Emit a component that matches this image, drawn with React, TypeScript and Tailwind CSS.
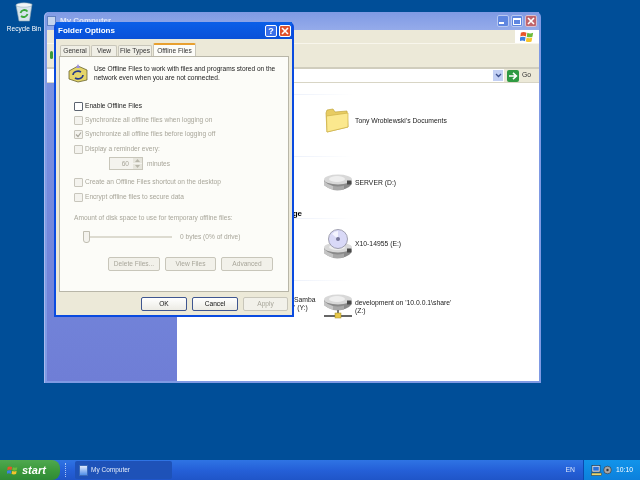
const FONT = 'font-["Liberation_Sans",Arial,sans-serif]';

function WinFlag({ size = 12 }: { size?: number }) {
  return (
    <svg width={size} height={size} viewBox="0 0 16 16">
      <path d="M1 3 Q4 1.5 7.4 3 L6.6 7.4 Q3.5 6 0.4 7.4 Z" fill="#e8552a" />
      <path d="M8.4 3.2 Q11.5 4.6 15 3.2 L14.2 7.6 Q11 9 7.7 7.6 Z" fill="#6dbb3a" />
      <path d="M0.2 8.4 Q3.4 7 6.4 8.4 L5.6 12.8 Q2.6 11.4 -0.6 12.8 Z" fill="#3d7fe0" />
      <path d="M7.5 8.6 Q10.8 10 14 8.6 L13.2 13 Q10 14.4 6.7 13 Z" fill="#f5c42c" />
    </svg>
  );
}

function DriveBody({ y = 0 }: { y?: number }) {
  return (
    <g transform={`translate(0 ${y})`}>
      <path d="M1 6 V11 Q3 13 8 15 Q15 17 22 15 Q27 13 29 10 V6 Z" fill="#8a8a8a" />
      <path d="M1 7 Q5 11 10 12 V16 Q4 14 1 11 Z" fill="#c4c4c4" />
      <path d="M10 12 Q16 13 21 11.5 V15.5 Q15 17 10 16 Z" fill="#a8a8a8" />
      <ellipse cx="15" cy="5.5" rx="14" ry="5" fill="#d8d8d8" />
      <ellipse cx="14" cy="5" rx="8" ry="3" fill="#eeeeee" />
      <rect x="24" y="6.5" width="4" height="4" fill="#4a4a4a" />
    </g>
  );
}

function Hdd() {
  return (
    <svg width="30" height="17" viewBox="0 0 30 17">
      <DriveBody />
    </svg>
  );
}

function CdDrive() {
  return (
    <svg width="30" height="30" viewBox="0 0 30 30">
      <DriveBody y={13} />
      <circle cx="15" cy="10" r="9.5" fill="#d9d9f7" stroke="#8c8c9c" strokeWidth="0.8" />
      <path d="M9 5 A8 8 0 0 1 15 2 L15 10 Z" fill="#f4f4ff" />
      <circle cx="15" cy="10" r="2" fill="#77779a" />
    </svg>
  );
}

function NetDrive() {
  return (
    <svg width="30" height="25" viewBox="0 0 30 25">
      <DriveBody />
      <rect x="1" y="21" width="28" height="2" fill="#666" />
      <rect x="14" y="16" width="2" height="5" fill="#777" />
      <rect x="12" y="19" width="6" height="5" fill="#e8c84a" stroke="#a08a20" strokeWidth="0.5" />
    </svg>
  );
}

function Folder() {
  return (
    <svg width="24" height="25" viewBox="0 0 24 25" className="ml-[2px]">
      <path d="M1 5 L2 2 L8 1 L10 4 L22 3 L23 19 L2 24 Z" fill="#e8cc62" stroke="#c2a63e" strokeWidth="0.7" />
      <path d="M1.5 8 L23 5 L23 19 L2 24 Z" fill="#fbe88e" stroke="#cfb148" strokeWidth="0.7" />
    </svg>
  );
}

function DriveRow({ icon, top, children }: { icon: React.ReactNode; top: string; children: React.ReactNode }) {
  return (
    <div className={`flex items-center ${top}`}>
      <div className="w-[32px] flex justify-start">{icon}</div>
      <div className="text-[6.8px] leading-[8px] text-[#222] whitespace-nowrap">{children}</div>
    </div>
  );
}

function Section({ label, children }: { label?: string; children?: React.ReactNode }) {
  return (
    <div className="h-[62px] relative">
      <div className="h-[11px] text-[8px] leading-[13px] font-bold text-black text-right pr-[237px]">{label}</div>
      <div className="h-px bg-gradient-to-r from-[#c8d4f0] to-white w-[176px]" />
      {children}
    </div>
  );
}

function TitleButton({ kind, faded }: { kind: 'help' | 'close' | 'min' | 'max'; faded?: boolean }) {
  const blue = faded ? 'bg-[#5f86e0] border-[#b8c8f0]' : 'bg-[#3a6fe8] border-white';
  const red = faded ? 'bg-[#c0646c] border-[#d8c0d0]' : 'bg-[#e0522c] border-white';
  return (
    <div className={`w-[12px] h-[12px] rounded-[2px] border flex items-end justify-center ${kind === 'close' ? red : blue}`}>
      {kind === 'help' && <span className="text-[9px] leading-[10px] font-bold text-white w-full text-center">?</span>}
      {kind === 'close' && (
        <svg width="10" height="10" viewBox="0 0 10 10">
          <path d="M2 2 L8 8 M8 2 L2 8" stroke="white" strokeWidth="1.6" />
        </svg>
      )}
      {kind === 'min' && <div className="w-[5px] h-[2px] bg-white mb-[2px] mr-[3px]" />}
      {kind === 'max' && <div className="w-[8px] h-[7px] border border-white border-t-2 mb-[1px]" />}
    </div>
  );
}

function ExplorerWindow() {
  return (
    <div className="absolute left-[44px] top-[12px] w-[497px] h-[371px] bg-[#7f9ae4] rounded-t-[5px] flex flex-col pl-[3px] pr-[2px] pb-[2px] shadow-[inset_1px_0_0_#a9bcf0]">
      <div className="h-[18px] flex items-center bg-gradient-to-b from-[#7f9ae4] to-[#95abea]">
        <div className="w-[9px] h-[10px] bg-[#c5d4ee] border border-[#5f7fc0]" />
        <span className="ml-[4px] text-[8px] font-bold text-[#dfe6f8]">My Computer</span>
        <div className="ml-auto flex gap-[2px] pr-[2px]">
          <TitleButton kind="min" faded />
          <TitleButton kind="max" faded />
          <TitleButton kind="close" faded />
        </div>
      </div>
      <div className="h-[14px] bg-[#ece9d8] flex justify-end border-b border-[#f8f6ec]">
        <div className="w-[24px] bg-white flex items-center justify-center">
          <WinFlag size={14} />
        </div>
      </div>
      <div className="h-[25px] bg-[#ece9d8] border-b-2 border-[#d0cdbd]">
        <div className="w-[3px] h-[8px] ml-[3px] bg-[#3a9a3a] rounded-full mt-[7px]" />
      </div>
      <div className="h-[14px] bg-[#ece9d8] flex items-center border-b border-[#d8d5c5]">
        <div className="h-full flex-1 bg-white flex items-center justify-end pr-[1px]">
          <div className="w-[10px] h-[11px] bg-[#c3d0f4] flex items-center justify-center">
            <svg width="7" height="5" viewBox="0 0 7 5">
              <path d="M1 1 L3.5 3.5 L6 1" stroke="#3c4f8c" strokeWidth="1.3" fill="none" />
            </svg>
          </div>
        </div>
        <div className="w-[35px] flex items-center pl-[3px] gap-[3px]">
          <svg width="12" height="12" viewBox="0 0 12 12">
            <rect width="12" height="12" rx="2" fill="#2f9a42" />
            <path d="M2 6 H9 M6 2.8 L9.4 6 L6 9.2" stroke="white" strokeWidth="1.6" fill="none" />
          </svg>
          <span className="text-[6.8px] text-[#333]">Go</span>
        </div>
      </div>
      <div className="flex-1 flex min-h-0">
        <div className="w-[130px] bg-gradient-to-b from-[#7a91e0] to-[#6f7ed6]" />
        <div className="flex-1 bg-white relative">
          <Section>
            <DriveRow top="mt-[13px] ml-[146px]" icon={<Folder />}>Tony Wroblewski's Documents</DriveRow>
          </Section>
          <Section label="">
            <DriveRow top="mt-[17px] ml-[146px]" icon={<Hdd />}>SERVER (D:)</DriveRow>
          </Section>
          <Section label="Storage">
            <DriveRow top="mt-[10px] ml-[146px]" icon={<CdDrive />}>X10-14955 (E:)</DriveRow>
          </Section>
          <Section>
            <div className="flex mt-[13px] ml-[117px]">
              <div className="w-[29px] text-[6.8px] leading-[8px] text-[#222] pt-[2px]">Samba<br />' (Y:)</div>
              <DriveRow top="" icon={<NetDrive />}>
                development on '10.0.0.1\share'<br />(Z:)
              </DriveRow>
            </div>
          </Section>
        </div>
      </div>
    </div>
  );
}

function Check({ checked, dark }: { checked?: boolean; dark?: boolean }) {
  return (
    <div className={`w-[9px] h-[9px] rounded-[1px] border bg-[#f4f3ee] shrink-0 flex items-center justify-center ${dark ? 'border-[#5c6470] bg-white' : 'border-[#c8c6bc]'}`}>
      {checked && (
        <svg width="7" height="7" viewBox="0 0 7 7">
          <path d="M1 3.5 L3 5.5 L6 1.5" stroke="#a8a69c" strokeWidth="1.2" fill="none" />
        </svg>
      )}
    </div>
  );
}

function CheckRow({ label, checked, mt }: { label: string; checked?: boolean; mt: string }) {
  return (
    <div className={`flex items-center gap-[2px] h-[10px] ${mt}`}>
      <Check checked={checked} />
      <span className="text-[6.6px] leading-[10px] text-[#a8a69a] whitespace-nowrap">{label}</span>
    </div>
  );
}

function PushButton({ label, w, disabled }: { label: string; w: string; disabled?: boolean }) {
  return (
    <div
      className={`${w} h-[14px] rounded-[2px] border flex items-center justify-center text-[6.6px] ${
        disabled
          ? 'border-[#c8c6ba] text-[#a8a69a] bg-[#f2f1ea]'
          : 'border-[#3f5690] text-[#111] bg-gradient-to-b from-white to-[#ecebe4]'
      }`}
    >
      {label}
    </div>
  );
}

function Tab({ label, w, active }: { label: string; w: string; active?: boolean }) {
  return (
    <div
      className={`${w} flex items-center justify-center text-[6.6px] text-[#333] whitespace-nowrap rounded-t-[2px] border-x border-t ${
        active
          ? 'h-[13px] bg-[#fcfcf8] border-[#c8c6ba] border-t-2 border-t-[#e8a030]'
          : 'h-[11px] bg-[#f0efe6] border-[#c8c6ba]'
      }`}
    >
      {label}
    </div>
  );
}

function OfflineIcon() {
  return (
    <svg width="20" height="19" viewBox="0 0 20 19" className="shrink-0">
      <path d="M1 7 L10 2 L19 6 V16 L10 18 L1 15 Z" fill="#e4d56a" stroke="#56521c" strokeWidth="0.7" />
      <path d="M10 0 L12 4 H8 Z" fill="#9a8ee0" />
      <path d="M5 11 A5 4 0 0 1 13 8 M15 11 A5 4 0 0 1 7 14" stroke="#243a8c" strokeWidth="1.6" fill="none" />
    </svg>
  );
}

function FolderOptions() {
  return (
    <div className="absolute left-[54px] top-[22px] w-[240px] h-[295px] bg-[#0a4be0] rounded-t-[5px] flex flex-col px-[2px] pb-[2px]">
      <div className="h-[17px] flex items-center pl-[2px] bg-gradient-to-b from-[#0b5fe8] to-[#0a50d8]">
        <span className="text-[8px] font-bold text-white">Folder Options</span>
        <div className="ml-auto flex gap-[2px] pr-[1px]">
          <TitleButton kind="help" />
          <TitleButton kind="close" />
        </div>
      </div>
      <div className="flex-1 bg-[#ece9d8] flex flex-col px-[3px]">
        <div className="flex items-end gap-[1px] h-[17px] pl-[1px]">
          <Tab label="General" w="w-[30px]" />
          <Tab label="View" w="w-[26px]" />
          <Tab label="File Types" w="w-[34px]" />
          <Tab label="Offline Files" w="w-[43px]" active />
        </div>
        <div className="h-[236px] bg-[#fcfcf8] border border-[#b8b6a8] flex flex-col pl-[14px] pr-[10px]">
          <div className="flex mt-[7px] -ml-[6px]">
            <OfflineIcon />
            <p className="ml-[6px] text-[6.6px] leading-[9px] text-[#222] whitespace-nowrap">
              Use Offline Files to work with files and programs stored on the<br />
              network even when you are not connected.
            </p>
          </div>
          <div className="flex items-center gap-[2px] h-[10px] mt-[18px]">
            <Check dark />
            <span className="text-[6.6px] leading-[10px] text-[#222]">Enable Offline Files</span>
          </div>
          <CheckRow label="Synchronize all offline files when logging on" mt="mt-[4px]" />
          <CheckRow label="Synchronize all offline files before logging off" checked mt="mt-[4px]" />
          <CheckRow label="Display a reminder every:" mt="mt-[5px]" />
          <div className="flex items-center h-[13px] mt-[3px] ml-[35px]">
            <div className="w-[34px] h-full border border-[#c8c6ba] bg-[#f4f3ee] flex items-center justify-end text-[6.6px] text-[#a8a69a]">
              <span className="mr-[4px]">60</span>
              <div className="w-[9px] h-full flex flex-col gap-px">
                <div className="flex-1 bg-[#e6e5dc] flex items-center justify-center">
                  <svg width="5" height="3" viewBox="0 0 5 3"><path d="M0 3 L2.5 0 L5 3 Z" fill="#b8b6aa" /></svg>
                </div>
                <div className="flex-1 bg-[#e6e5dc] flex items-center justify-center">
                  <svg width="5" height="3" viewBox="0 0 5 3"><path d="M0 0 L2.5 3 L5 0 Z" fill="#b8b6aa" /></svg>
                </div>
              </div>
            </div>
            <span className="ml-[4px] text-[6.6px] text-[#a8a69a]">minutes</span>
          </div>
          <CheckRow label="Create an Offline Files shortcut on the desktop" mt="mt-[7px]" />
          <CheckRow label="Encrypt offline files to secure data" mt="mt-[5px]" />
          <div className="mt-[11px] h-[10px] text-[6.6px] leading-[10px] text-[#a8a69a] whitespace-nowrap">Amount of disk space to use for temporary offline files:</div>
          <div className="flex items-center h-[14px] mt-[7px]">
            <div className="relative w-[89px] ml-[9px] h-[2px] bg-[#dddbd0]">
              <div className="absolute left-[0px] -top-[5px] w-[7px] h-[12px] border border-[#c0beb2] bg-[#f4f3ee] rounded-b-[3px]" />
            </div>
            <span className="ml-[8px] text-[6.6px] text-[#a8a69a] whitespace-nowrap">0 bytes (0% of drive)</span>
          </div>
          <div className="flex gap-[5px] ml-[34px] mt-[13px]">
            <PushButton label="Delete Files..." w="w-[52px]" disabled />
            <PushButton label="View Files" w="w-[51px]" disabled />
            <PushButton label="Advanced" w="w-[52px]" disabled />
          </div>
        </div>
        <div className="flex justify-end gap-[5px] mt-[5px] pr-[1px]">
          <PushButton label="OK" w="w-[46px]" />
          <PushButton label="Cancel" w="w-[46px]" />
          <PushButton label="Apply" w="w-[45px]" disabled />
        </div>
      </div>
    </div>
  );
}

function Taskbar() {
  return (
    <div className="absolute left-0 right-0 bottom-0 h-[20px] bg-gradient-to-b from-[#2f74e4] via-[#2560d8] to-[#1f55c8] flex items-center">
      <div className="w-[60px] h-full bg-gradient-to-b from-[#4fa84f] via-[#3c9a3c] to-[#2f8a36] rounded-r-[8px] flex items-center pl-[7px] gap-[4px]">
        <WinFlag size={11} />
        <span className="text-[11px] font-bold italic text-white leading-none">start</span>
      </div>
      <div className="w-[2px] h-[14px] ml-[5px] border-l border-dotted border-[#a8c4f4]" />
      <div className="ml-[8px] w-[97px] h-[18px] bg-[#1e52b8] rounded-[2px] flex items-center pl-[4px] gap-[3px]">
        <div className="w-[9px] h-[11px] bg-gradient-to-b from-[#dfe8fa] to-[#4f8fe8] border border-[#3a6ab8]" />
        <span className="text-[6.5px] text-[#e4ecfa]">My Computer</span>
      </div>
      <div className="ml-auto h-full flex items-center">
        <span className="text-[6.8px] text-[#dce6fa] mr-[8px]">EN</span>
        <div className="w-[57px] h-full bg-gradient-to-b from-[#1294ea] to-[#0c80dc] border-l border-[#0a4ab0] flex items-center pl-[7px]">
          <svg width="11" height="11" viewBox="0 0 11 11">
            <rect x="1" y="0.5" width="8" height="6.5" fill="#e8eef8" stroke="#222" strokeWidth="0.6" />
            <rect x="2.2" y="1.7" width="5.6" height="4" fill="#2a70d8" />
            <rect x="0.5" y="8" width="10" height="2.4" fill="#e8d870" stroke="#333" strokeWidth="0.5" />
          </svg>
          <svg width="9" height="10" viewBox="0 0 9 10" className="ml-[1px]">
            <circle cx="4.5" cy="5" r="3.8" fill="#a8a8a8" stroke="#333" strokeWidth="0.6" />
            <circle cx="4.5" cy="5" r="1.2" fill="#333" />
          </svg>
          <span className="ml-[4px] text-[6.8px] text-white whitespace-nowrap">10:10</span>
        </div>
      </div>
    </div>
  );
}

export default function App() {
  return (
    <div className={`relative w-[640px] h-[480px] overflow-hidden bg-[#004e98] blur-[0.3px] ${FONT}`}>
      <div className="absolute left-[0px] top-[2px] w-[48px] flex flex-col items-center">
        <svg width="18" height="20" viewBox="0 0 18 20">
          <path d="M1 3 L17 2 L14.5 19 H4 Z" fill="#d6e4ec" stroke="#8ba4b4" strokeWidth="0.6" />
          <ellipse cx="9" cy="3" rx="8" ry="2.2" fill="#f0f5f8" stroke="#8ba4b4" strokeWidth="0.5" />
          <path d="M5.5 11 A4 4 0 0 1 12.5 9.5 M12.5 12 A4 4 0 0 1 6 14" stroke="#3aa83a" strokeWidth="1.8" fill="none" />
        </svg>
        <span className="mt-[2px] text-[6.5px] leading-[9px] text-white whitespace-nowrap">Recycle Bin</span>
      </div>
      <ExplorerWindow />
      <FolderOptions />
      <Taskbar />
    </div>
  );
}
